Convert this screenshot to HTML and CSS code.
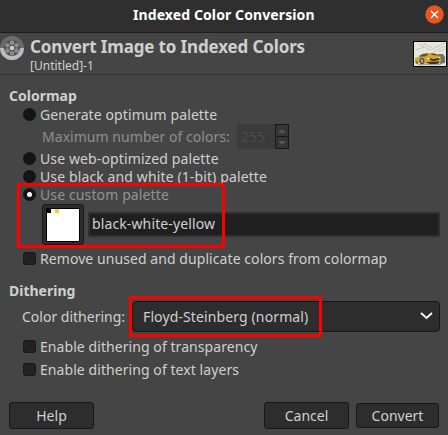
FILE: index.html
```html
<!DOCTYPE html>
<html lang="en">
<head>
<meta charset="utf-8">
<title>Indexed Color Conversion</title>
<link rel="stylesheet" href="styles.css">
</head>
<body>
<main class="dialog">
  <header class="titlebar">
    <h1 class="title">Indexed Color Conversion</h1>
    <button class="close" aria-label="Close"><svg width="19" height="19" viewBox="0 0 19 19"><circle cx="9.5" cy="9.5" r="9.2" fill="#e95420"/><path d="M6 6l7 7M13 6l-7 7" stroke="#fff" stroke-width="1.4"/></svg></button>
  </header>
  <section class="banner">
    <svg class="logo" width="24" height="24" viewBox="0 0 24 24">
      <circle cx="12" cy="12" r="12" fill="#6d6c6c"/>
      <path d="M0 12a12 12 0 0 0 24 0z" fill="#bdbcbc"/>
      <circle cx="12" cy="12" r="8" fill="#4d484c"/>
      <g fill="#91888f"><circle cx="12" cy="6.7" r="2.4"/><circle cx="16.6" cy="9.3" r="2.4"/><circle cx="16.6" cy="14.7" r="2.4"/><circle cx="12" cy="17.3" r="2.4"/><circle cx="7.4" cy="14.7" r="2.4"/><circle cx="7.4" cy="9.3" r="2.4"/></g>
      <circle cx="12" cy="12" r="2.3" fill="#d2c9cf"/>
    </svg>
    <div class="heading">
      <h2 class="heading-title">Convert Image to Indexed Colors</h2>
      <p class="heading-sub">[Untitled]-1</p>
    </div>
    <svg class="thumb" width="34" height="26" viewBox="0 0 34 26">
      <path d="M0 0h34v26H0z" fill="#000"/><path d="M1 1h32v24H1z" fill="#e6e6df"/>
      <path d="M6 3l11 6M10 2l9 5M18 9l13-7M20 11l12-6M25 11l7-3M3 9l8-3" stroke="#b5b4ae" stroke-width=".7" fill="none"/>
      <path d="M23 13l7 0 2 3v6l-5 1z" fill="#6b7270"/>
      <path d="M2 17l3-1 5-3 8-1 6 1 3 3 1 3-1 3-12 1-10-1-3-1z" fill="#d6a52c"/>
      <path d="M6 15l4-2.2 6-.3-3 2.7-6 .6zM18 12l5 1 2 1.8-6-.8z" fill="#5c533a"/>
      <path d="M2 20l3 0 0 3-2 0z" fill="#8f7a3c"/>
      <path d="M17 17l3 1.2 6-1.2.6 1.6-5.6 1.4-3.6-.6zM13 21l13-.5v2l-8 1z" fill="#35302a"/>
      <path d="M14 17l2.5 1M25.5 16.5l1.8-.3" stroke="#fff5cb"/>
      <ellipse cx="9" cy="20" rx="2.4" ry="3.2" fill="#4a4a48"/><ellipse cx="9" cy="20" rx="1.3" ry="2" fill="#a5a5a2"/>
      <path d="M5 23.6h23" stroke="#8d8d88" stroke-width=".8"/>
    </svg>
  </section>
  <form class="body">
    <h3 class="section colormap">Colormap</h3>
    <div class="row"><i class="radio"></i><span class="t-generate">Generate optimum palette</span></div>
    <div class="row r-maximum"><span class="t-maximum">Maximum number of colors:</span>
      <div class="spin"><span class="spin-value">255</span><div class="steps"><b><svg width="8" height="4"><path d="M0 4l4-4 4 4z"/></svg></b><b><svg width="8" height="4"><path d="M0 0l4 4 4-4z"/></svg></b></div></div>
    </div>
    <div class="row r-web"><i class="radio"></i><span class="wide">Use web-optimized palette</span></div>
    <div class="row r-bw"><i class="radio"></i><span class="wide">Use black and white (1-bit) palette</span></div>
    <div class="custom">
      <div class="row r-custom"><i class="radio checked"></i><span class="wide">Use custom palette</span></div>
      <div class="picker">
        <div class="swatch"><svg width="34" height="34" shape-rendering="crispEdges"><path d="M0 0h34v34H0z"/><path d="M1 1h32v32H1z" fill="#fff"/><path d="M1 1h4v4H1z"/><path d="M9 1h4v4H9z" fill="#ffd500"/></svg></div>
        <div class="entry"><span class="wide">black-white-yellow</span></div>
      </div>
      <div class="mark mark-palette"></div>
    </div>
    <div class="row"><i class="check"></i><span class="snug">Remove unused and duplicate colors from colormap</span></div>
    <h3 class="section dithering">Dithering</h3>
    <div class="row r-combo"><span class="t-label">Color dithering:</span>
      <div class="combo"><span class="wide">Floyd-Steinberg (normal)</span><svg width="13" height="8" viewBox="0 0 13 8"><path d="M1 1l5.5 5L12 1" fill="none" stroke="#fff" stroke-width="1.7"/></svg><div class="mark mark-dither"></div></div>
    </div>
    <div class="row r-check"><i class="check"></i><span class="snug">Enable dithering of transparency</span></div>
    <div class="row r-check"><i class="check"></i><span class="snug">Enable dithering of text layers</span></div>
    <footer class="actions">
      <button type="button" class="btn help">Help</button>
      <button type="button" class="btn cancel">Cancel</button>
      <button type="button" class="btn convert">Convert</button>
    </footer>
  </form>
</main>
</body>
</html>
```
FILE: styles.css
```css
* { box-sizing: border-box; margin: 0; padding: 0; }
body { width: 448px; height: 435px; overflow: hidden; background: #454545; color: #d0d0d0; font: 14px "Noto Sans", sans-serif; white-space: nowrap; }
svg { display: block; flex: none; }
.dialog { display: flex; flex-direction: column; height: 435px; }
.titlebar { height: 33px; background: #302f2f; border-bottom: 1px solid #1d1d1d; display: flex; align-items: center; padding: 0 4px 3px 133px; }
.title { flex: 1; font-size: 14px; letter-spacing: .1px; color: #fff; }
.close { border: 0; background: none; width: 19px; height: 19px; margin-top: -1px; }
.banner { height: 42px; border-bottom: 1px solid #303030; display: flex; align-items: flex-start; }
.logo { margin-top: 3px; }
.heading { flex: 1; padding-left: 6px; }
.heading-title { font-size: 17px; line-height: 28px; height: 25px; letter-spacing: -.14px; }
.heading-sub { font-size: 12px; line-height: 15px; }
.thumb { margin: 8px 1px 0 0; }
.body { flex: 1; display: flex; flex-direction: column; }
.section { font-size: 14px; line-height: 20px; height: 20px; padding-left: 9px; }
.colormap { margin-top: 11px; }
.row { display: flex; align-items: center; padding-left: 23px; height: 17px; line-height: 17px; }
.wide { letter-spacing: .12px; }
.snug { letter-spacing: .07px; }
.t-generate { letter-spacing: .1px; }
.radio, .check { flex: none; width: 13px; height: 13px; background: #141414; border-radius: 50%; margin-right: 4px; }
.checked { border: 4px solid #141414; background: #fff; }
.check { background: #222; border: 1px solid #161616; border-radius: 3px; }
.r-maximum { height: 27px; padding-left: 42px; }
.t-maximum { width: 195px; color: #8f8f8f; letter-spacing: .04px; }
.spin { display: flex; width: 52px; height: 25px; background: #3b3b3b; color: #4b4b4b; }
.spin-value { width: 38px; padding-left: 4px; line-height: 25px; }
.steps { width: 14px; display: grid; grid-template-rows: 11px 12px; border: 1px solid #181818; height: 25px; }
.steps b { display: grid; place-items: center; background: #353535; fill: #555; }
.steps b + b { border-top: 1px solid #181818; }
.r-bw { margin: 1px 0; }
.custom { position: relative; height: 64px; }
.r-custom { margin-bottom: 1px; color: #929292; }
.picker { display: flex; padding: 0 8px 0 42px; gap: 4px; }
.swatch { width: 42px; height: 41px; padding: 3px; border: 1px solid #191919; border-radius: 3px; background: #2c2c2c; }
.entry { flex: 1; height: 25px; margin-top: 8px; border: 2px solid #303030; background: #202020; line-height: 20px; padding-left: 2px; }
.mark { position: absolute; border: 3px solid #f00; pointer-events: none; }
.mark-palette { left: 17px; top: -3px; width: 208px; height: 65px; }
.dithering { margin-top: 14px; }
.r-combo { height: 31px; padding-left: 22px; }
.t-label { width: 110px; }
.combo { position: relative; width: 308px; height: 31px; background: #2d2d2d; border: 1px solid #171717; border-radius: 4px; display: flex; align-items: center; justify-content: space-between; padding: 0 6px 1px 10px; }
.mark-dither { left: -4px; top: -6px; width: 193px; height: 41px; }
.r-check { margin-top: 6px; }
.actions { display: flex; align-items: center; margin-top: 24px; height: 27px; padding: 0 9px; }
.btn { width: 85px; height: 27px; border: 1px solid #171717; border-radius: 3px; background: #2d2d2d; color: #d0d0d0; font: inherit; }
.cancel { margin-left: auto; margin-right: 7px; }
.convert { width: 83px; height: 25px; }
```
